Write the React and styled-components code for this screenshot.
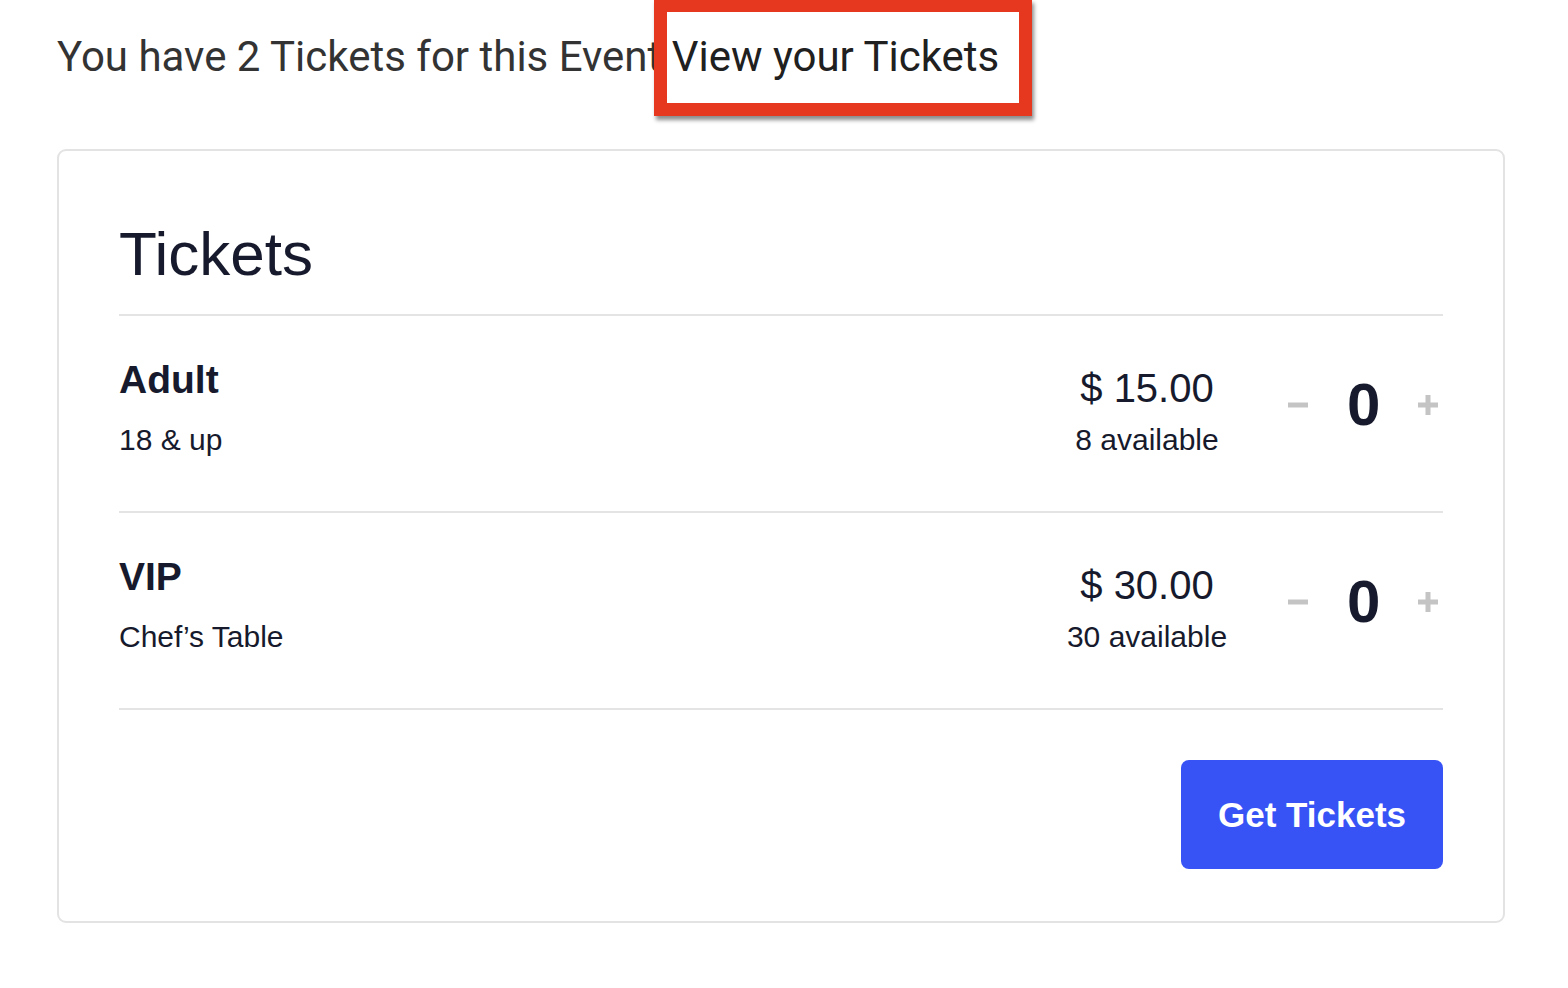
import styled, { createGlobalStyle } from "styled-components";

const tickets = [
  { name: "Adult", sub: "18 & up", price: "$ 15.00", left: "8 available", qty: 0 },
  { name: "VIP", sub: "Chef’s Table", price: "$ 30.00", left: "30 available", qty: 0 },
];

export default function App() {
  return (
    <>
      <GlobalStyle />
      <Page>
        <Notice>
          You have 2 Tickets for this Event{" "}
          <ViewLink>
            View your Tickets
            <Highlight />
          </ViewLink>
        </Notice>

        <Card>
          <Heading>Tickets</Heading>
          {tickets.map((t) => (
            <Row key={t.name}>
              <Info>
                <Name>{t.name}</Name>
                <Sub>{t.sub}</Sub>
              </Info>
              <Price>
                <div className="amount">{t.price}</div>
                <div className="left">{t.left}</div>
              </Price>
              <Stepper>
                <StepButton aria-label="remove">
                  <svg width="22" height="22" viewBox="0 0 22 22">
                    <path d="M1 11h20" stroke="currentColor" strokeWidth="5" />
                  </svg>
                </StepButton>
                <Qty>{t.qty}</Qty>
                <StepButton aria-label="add">
                  <svg width="22" height="22" viewBox="0 0 22 22">
                    <path d="M1 11h20M11 1v20" stroke="currentColor" strokeWidth="5" />
                  </svg>
                </StepButton>
              </Stepper>
            </Row>
          ))}
          <Footer>
            <GetButton>Get Tickets</GetButton>
          </Footer>
        </Card>
      </Page>
    </>
  );
}

const GlobalStyle = createGlobalStyle`
  html, body {
    margin: 0;
    background: #ffffff;
  }
  body {
    font-family: "Liberation Sans", Arial, sans-serif;
    color: #161a2c;
  }
`;

const Page = styled.div`
  width: 1448px;
  padding: 0 0 60px 57px;
`;

const Notice = styled.div`
  font-family: Roboto, "Liberation Sans", sans-serif;
  font-size: 42px;
  color: #333333;
  padding-top: 33px;
  line-height: 48px;
  height: 116px;
  box-sizing: border-box;
`;

const ViewLink = styled.span`
  position: relative;
  color: #202020;
`;

const Highlight = styled.span`
  position: absolute;
  left: -18px;
  top: -33px;
  width: 378px;
  height: 117px;
  box-sizing: border-box;
  border: 13px solid #e5381f;
  box-shadow: 2px 4px 4px rgba(0, 0, 0, 0.45);
  pointer-events: none;
`;

const Card = styled.div`
  border: 2px solid #e3e3e3;
  border-radius: 9px;
  padding: 67px 60px 52px;
  margin-top: 33px;
`;

const Heading = styled.h2`
  margin: 0;
  font-size: 62px;
  font-weight: 400;
  line-height: normal;
  padding-bottom: 25px;
  border-bottom: 2px solid #e4e4e4;
`;

const Row = styled.div`
  display: flex;
  align-items: center;
  padding: 42px 0 54px;
  border-bottom: 2px solid #e4e4e4;
`;

const Info = styled.div`
  flex: 1;
  display: flex;
  flex-direction: column;
  gap: 21px;
`;

const Name = styled.div`
  font-size: 39px;
  font-weight: 700;
  line-height: normal;
`;

const Sub = styled.div`
  font-size: 30px;
  line-height: normal;
`;

const Price = styled.div`
  width: 164px;
  margin-top: 8px;
  text-align: center;
  .amount {
    font-size: 40px;
    line-height: normal;
  }
  .left {
    font-size: 30px;
    line-height: normal;
    margin-top: 12px;
  }
`;

const Stepper = styled.div`
  display: flex;
  align-items: center;
  gap: 38px;
  margin: 0 4px 6px 58px;
`;

const StepButton = styled.button`
  border: none;
  background: transparent;
  padding: 0;
  color: #c4c4c4;
  display: flex;
  cursor: pointer;
`;

const Qty = styled.div`
  font-size: 60px;
  font-weight: 700;
  width: 32px;
  text-align: center;
  line-height: normal;
`;

const Footer = styled.div`
  display: flex;
  justify-content: flex-end;
  padding-top: 50px;
`;

const GetButton = styled.button`
  font-family: "Liberation Sans", Arial, sans-serif;
  background: #3753f6;
  color: #ffffff;
  border: none;
  border-radius: 8px;
  width: 262px;
  height: 109px;
  font-size: 35px;
  font-weight: 700;
  cursor: pointer;
`;
